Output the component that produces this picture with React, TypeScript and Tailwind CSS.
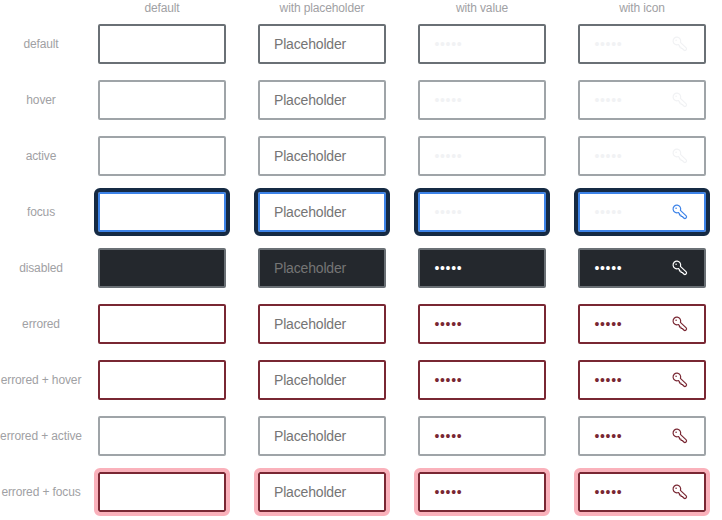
type Kind = "default" | "placeholder" | "value" | "icon";

interface State {
  label: string;
  box: string;
  text: string;
  icon: string;
}

const columns: { label: string; kind: Kind }[] = [
  { label: "default", kind: "default" },
  { label: "with placeholder", kind: "placeholder" },
  { label: "with value", kind: "value" },
  { label: "with icon", kind: "icon" },
];

const states: State[] = [
  { label: "default", box: "border-[#6a7075]", text: "text-[#f1f2f4]", icon: "text-[#f1f2f4]" },
  { label: "hover", box: "border-[#9fa4a8]", text: "text-[#f1f2f4]", icon: "text-[#f1f2f4]" },
  { label: "active", box: "border-[#9fa4a8]", text: "text-[#f1f2f4]", icon: "text-[#f1f2f4]" },
  {
    label: "focus",
    box: "border-[#3d83e8] outline-4 outline-[#152a44]",
    text: "text-[#f1f2f4]",
    icon: "text-[#3d83e8]",
  },
  { label: "disabled", box: "border-[#6a7075] bg-[#24282d]", text: "text-white", icon: "text-white" },
  { label: "errored", box: "border-[#792733]", text: "text-[#792733]", icon: "text-[#792733]" },
  { label: "errored + hover", box: "border-[#792733]", text: "text-[#792733]", icon: "text-[#792733]" },
  { label: "errored + active", box: "border-[#9fa4a8]", text: "text-[#792733]", icon: "text-[#792733]" },
  {
    label: "errored + focus",
    box: "border-[#792733] outline-4 outline-[#fab1bb]",
    text: "text-[#792733]",
    icon: "text-[#792733]",
  },
];

function KeyIcon({ className }: { className: string }) {
  return (
    <svg viewBox="0 0 16 16" className={`size-4 shrink-0 ${className}`} fill="none" stroke="currentColor" strokeWidth="1.2" strokeLinejoin="round">
      <path d="M8.4 6.4 A3.8 3.8 0 1 0 6.3 8.5 L7.4 9.6 L7.5 11 L8.9 11.1 L9.1 12.3 L10.3 12.5 L11.8 14 Q12.9 15 14 14 Q15.1 12.9 14.2 11.9 Z" />
      <circle cx="4.1" cy="4.2" r=".8" fill="currentColor" stroke="none" />
    </svg>
  );
}

function PasswordField({ state, kind }: { state: State; kind: Kind }) {
  const filled = kind === "value" || kind === "icon";
  return (
    <div className={`flex h-10 w-32 items-center rounded-xs border-2 pr-4 ${filled ? "pl-[14.4px]" : "pl-3.5"} ${state.box}`}>
      <input
        type="password"
        readOnly
        defaultValue={filled ? "12345" : ""}
        placeholder={kind === "placeholder" ? "Placeholder" : ""}
        className={`min-w-0 flex-1 bg-transparent text-sm outline-none placeholder:text-[#757575] ${filled ? "tracking-[0.7px]" : "tracking-[-0.17px]"} ${state.text}`}
      />
      {kind === "icon" && <KeyIcon className={state.icon} />}
    </div>
  );
}

export default function App() {
  return (
    <main className="h-[520px] w-[722px] overflow-hidden bg-white font-['Liberation_Sans',Arial,sans-serif]">
      <div className="grid w-[722px] grid-cols-[82px_repeat(4,160px)] text-xs tracking-[-0.12px] text-[#9fa1a4]">
        <div />
        {columns.map((c) => (
          <div key={c.kind} className="h-4 text-center leading-4">
            {c.label}
          </div>
        ))}
      </div>
      {states.map((state) => (
        <div key={state.label} className="grid h-14 w-[722px] grid-cols-[82px_repeat(4,160px)] items-center">
          <div className="text-center text-xs tracking-[-0.12px] whitespace-nowrap text-[#9fa1a4]">{state.label}</div>
          {columns.map((c) => (
            <div key={c.kind} className="flex justify-center">
              <PasswordField state={state} kind={c.kind} />
            </div>
          ))}
        </div>
      ))}
    </main>
  );
}
